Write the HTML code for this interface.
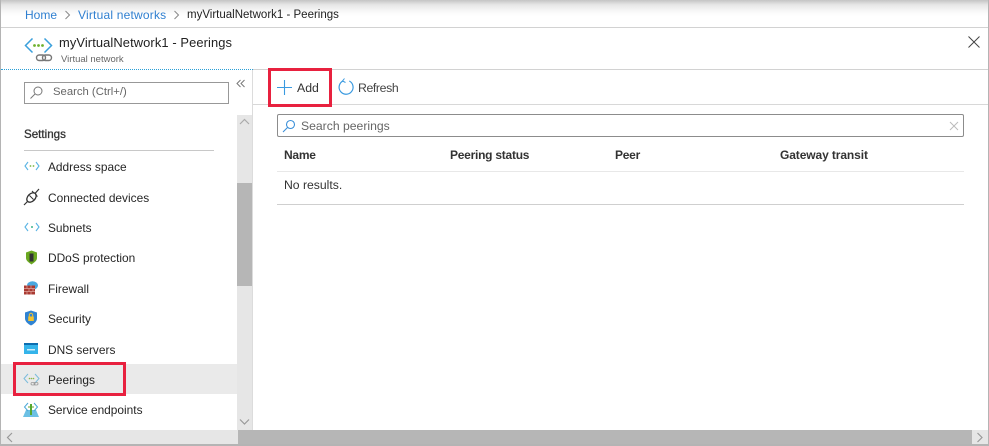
<!DOCTYPE html>
<html><head><meta charset="utf-8"><style>
html,body{margin:0;padding:0;background:#fff}
#p{position:relative;width:989px;height:446px;overflow:hidden;background:#fff;font-family:"Liberation Sans",sans-serif;font-size:12px;color:#262626}
#p div,#p svg{position:absolute}
.t{white-space:nowrap;line-height:16px;height:16px}
.m{left:48px;font-size:11.900px}
.b{font-weight:bold;font-size:12px;letter-spacing:-.25px;color:#333}
</style></head><body><div id="p">
<div style="left:0;top:0;width:989px;height:16px;background:linear-gradient(#c4c4c4,#e6e6e6 30%,#f8f8f8 70%,#fff)"></div>
<div style="left:0;top:27px;width:989px;height:1px;background:#d2d2d2"></div>
<div style="left:0;top:0;width:1px;height:446px;background:#b4b4b4"></div>
<div style="left:988px;top:0;width:1px;height:446px;background:#b4b4b4"></div>
<div class="t" style="left:25px;top:7px;color:#2f7fd0;font-size:12px">Home</div>
<svg style="left:64px;top:10px" width="8" height="10"><path d="M1.500 1l4 4-4 4" fill="none" stroke="#888"/></svg>
<div class="t" style="left:78px;top:7px;color:#2f7fd0;font-size:12px;letter-spacing:.2px">Virtual networks</div>
<svg style="left:173px;top:10px" width="8" height="10"><path d="M1.500 1l4 4-4 4" fill="none" stroke="#888"/></svg>
<div class="t" style="left:187px;top:7px;font-size:11.500px;color:#222">myVirtualNetwork1 - Peerings</div>
<svg style="left:24px;top:38px" width="30" height="25"><path d="M8.500 .5L1.500 7.500l7 7M20.500 .5l7 7-7 7" fill="none" stroke="#3aa0dc" stroke-width="1.500"/><circle cx="10.500" cy="7.500" r="1.400" fill="#6fb12c"/><circle cx="14.500" cy="7.500" r="1.400" fill="#6fb12c"/><circle cx="18.500" cy="7.500" r="1.400" fill="#6fb12c"/><rect x="12.500" y="17" width="9" height="5.500" rx="2.700" fill="none" stroke="#777" stroke-width="1.400"/><rect x="18.500" y="17" width="9" height="5.500" rx="2.700" fill="none" stroke="#777" stroke-width="1.400"/></svg>
<div class="t" style="left:59px;top:35px;font-size:12.900px;letter-spacing:.1px;color:#222">myVirtualNetwork1 - Peerings</div>
<div class="t" style="left:61px;top:52px;font-size:9.500px;color:#666">Virtual network</div>
<svg style="left:967px;top:35px" width="14" height="14"><path d="M1.500 1.500l11 11M12.500 1.500l-11 11" stroke="#444" fill="none"/></svg>
<div style="left:1px;top:69px;width:252px;height:0;border-top:1px dotted #2aa0d8"></div>
<div style="left:253px;top:69px;width:735px;height:1px;background:#d2d2d2"></div>
<div style="left:253px;top:104px;width:735px;height:1px;background:#d8d8d8"></div>
<div style="left:252px;top:70px;width:1px;height:360px;background:#dcdcdc"></div>
<div style="left:24px;top:82px;width:203px;height:20px;border:1px solid #989898"></div>
<svg style="left:29px;top:85px" width="15" height="15"><circle cx="9" cy="6" r="4" fill="none" stroke="#777"/><path d="M6 9l-4.500 4.500" stroke="#777" fill="none"/></svg>
<div class="t" style="left:53px;top:84px;font-size:11.300px;color:#666">Search (Ctrl+/)</div>
<svg style="left:236px;top:79px" width="10" height="10"><path d="M4.500 1L1 4.500 4.500 8M8.500 1L5 4.500 8.500 8" fill="none" stroke="#777"/></svg>
<div class="t b" style="left:24px;top:127px;font-size:11.600px;letter-spacing:0;font-weight:normal;-webkit-text-stroke:.3px #333">Settings</div>
<div style="left:24px;top:150px;width:190px;height:1px;background:#c8c8c8"></div>
<div style="left:237px;top:115px;width:15px;height:315px;background:#e6e6e6"></div>
<div style="left:237px;top:183px;width:15px;height:103px;background:#b6b6b6"></div>
<svg style="left:239px;top:118px" width="11" height="8"><path d="M1 6l4.500-4.500L10 6" fill="none" stroke="#aaa" stroke-width="1.200"/></svg>
<svg style="left:239px;top:418px" width="11" height="8"><path d="M1 1.500L5.500 6 10 1.500" fill="none" stroke="#999" stroke-width="1.200"/></svg>
<div style="left:1px;top:364px;width:236px;height:30px;background:#eaeaea"></div>
<div class="t m" style="top:159px">Address space</div>
<svg style="left:24px;top:160px" width="16" height="12"><path d="M4 2L1 6l3 4M12 2l3 4-3 4" fill="none" stroke="#5ab4e4" stroke-width="1.100"/><circle cx="6.500" cy="6" r=".9" fill="#7ab648"/><circle cx="9.500" cy="6" r=".9" fill="#7ab648"/></svg>
<div class="t m" style="top:190px">Connected devices</div>
<svg style="left:23px;top:188px" width="17" height="18"><path d="M1 17l4-4M12 5.500l4-4.500" fill="none" stroke="#333" stroke-width="1.200"/><ellipse cx="8.500" cy="9.500" rx="5.500" ry="3.700" transform="rotate(-45 8.500 9.500)" fill="none" stroke="#333" stroke-width="1.300"/><path d="M6.500 7.500l4 4M9 3l2 2M12.500 6.500l2 2" fill="none" stroke="#333"/></svg>
<div class="t m" style="top:220px">Subnets</div>
<svg style="left:24px;top:221px" width="16" height="12"><path d="M4 2L1 6l3 4M12 2l3 4-3 4" fill="none" stroke="#5ab4e4" stroke-width="1.100"/><circle cx="8" cy="6" r="1" fill="#3cb48c"/></svg>
<div class="t m" style="top:250px">DDoS protection</div>
<svg style="left:25px;top:250px" width="13" height="15"><path d="M1 2.500l5.500-2 5.500 2v5.500c0 3-3 4.500-5.500 6.500C4 12.500 1 11 1 8z" fill="#6aa820"/><rect x="4.500" y="3.500" width="4" height="8" fill="#333"/></svg>
<div class="t m" style="top:281px">Firewall</div>
<svg style="left:23px;top:280px" width="16" height="16"><ellipse cx="9.500" cy="5.500" rx="5.500" ry="4.300" fill="#4aa8e0"/><rect x="1" y="5.500" width="11" height="9" fill="#a93a32"/><path d="M1 8.500h11M1 11.500h11M4 5.500v3M8 5.500v3M6 8.500v3M10 8.500v3M4 11.500v3M8 11.500v3" stroke="#e0a49c" stroke-width=".7"/></svg>
<div class="t m" style="top:311px">Security</div>
<svg style="left:24px;top:310px" width="14" height="16"><path d="M1 2.500L7 .5l6 2v6c0 3-3 5.500-6 7-3-1.500-6-4-6-7z" fill="#2f83d2"/><rect x="4.200" y="6.500" width="5.600" height="4.500" fill="#f2c230"/><path d="M5.300 6.500V5a1.700 1.700 0 013.400 0v1.500" fill="none" stroke="#f2c230"/></svg>
<div class="t m" style="top:342px">DNS servers</div>
<svg style="left:24px;top:343px" width="14" height="12"><rect width="14" height="11" fill="#35b4ea"/><rect y="0" width="14" height="2" fill="#0e6eb0"/><rect x="3" y="6" width="8" height="1.500" fill="#cdeefb"/></svg>
<div class="t m" style="top:372px;color:#222">Peerings</div>
<svg style="left:23px;top:373px" width="17" height="14"><path d="M5 1L1 5.500 5 10M12 1l4 4.500-4 4.500" fill="none" stroke="#7abcdc" stroke-width="1"/><circle cx="6.500" cy="5.500" r=".8" fill="#8ab84c"/><circle cx="8.500" cy="5.500" r=".8" fill="#8ab84c"/><circle cx="10.500" cy="5.500" r=".8" fill="#8ab84c"/><rect x="8" y="9.500" width="4" height="2.500" rx="1.200" fill="none" stroke="#999" stroke-width=".8"/><rect x="11" y="9.500" width="4" height="2.500" rx="1.200" fill="none" stroke="#999" stroke-width=".8"/></svg>
<div class="t m" style="top:402px">Service endpoints</div>
<svg style="left:23px;top:402px" width="16" height="16"><path d="M0 15l3-7h10l3 7z" fill="#6cc0e4"/><path d="M5 1L1.500 5 5 9M11 1l3.500 4L11 9" fill="none" stroke="#4aa8d8"/><path d="M8 2v11" stroke="#54a830" stroke-width="2"/><circle cx="6" cy="5" r=".9" fill="#7ab648"/><circle cx="10" cy="5" r=".9" fill="#7ab648"/></svg>
<div style="left:13px;top:362px;width:107px;height:28px;border:3px solid #e8213f"></div>
<div style="left:268px;top:68px;width:58px;height:33px;border:3px solid #e8213f"></div>
<svg style="left:277px;top:80px" width="15" height="15"><path d="M7.500 0v15M0 7.500h15" stroke="#3a9ae0" stroke-width="1.100" fill="none"/></svg>
<div class="t" style="left:297px;top:80px;font-size:12.300px;color:#333">Add</div>
<svg style="left:337px;top:78px" width="18" height="18"><path d="M6.300 2.800a7 7 0 1 0 6 .2" fill="none" stroke="#3a9ae0" stroke-width="1.200"/><path d="M7.500 0.500L5.500 3l3 1.500" fill="none" stroke="#3a9ae0" stroke-width="1"/></svg>
<div class="t" style="left:358px;top:80px;font-size:12.300px;letter-spacing:-.4px;color:#444">Refresh</div>
<div style="left:277px;top:114px;width:685px;height:21px;border:1px solid #8c8c8c;border-radius:2px"></div>
<svg style="left:282px;top:119px" width="14" height="14"><circle cx="8.500" cy="5.500" r="4" fill="none" stroke="#3a8fd8" stroke-width="1.100"/><path d="M5.500 8.500L1 13" stroke="#3a8fd8" stroke-width="1.100" fill="none"/></svg>
<div class="t" style="left:301px;top:118px;font-size:12.200px;color:#666">Search peerings</div>
<svg style="left:949px;top:121px" width="10" height="10"><path d="M1 1l8 8M9 1L1 9" stroke="#bbb" fill="none"/></svg>
<div class="t b" style="left:284px;top:147px">Name</div>
<div class="t b" style="left:450px;top:147px">Peering status</div>
<div class="t b" style="left:615px;top:147px">Peer</div>
<div class="t b" style="left:780px;top:147px;letter-spacing:-.1px">Gateway transit</div>
<div style="left:277px;top:171px;width:687px;height:1px;background:#e8e8e8"></div>
<div class="t" style="left:284px;top:177px;font-size:12.200px;color:#333">No results.</div>
<div style="left:277px;top:204px;width:687px;height:1px;background:#cfcfcf"></div>
<div style="left:1px;top:430px;width:987px;height:14px;background:#e6e6e6"></div>
<div style="left:238px;top:430px;width:734px;height:14px;background:#b6b6b6"></div>
<svg style="left:6px;top:432px" width="8" height="11"><path d="M6 1L1.500 5.500 6 10" fill="none" stroke="#999" stroke-width="1.200"/></svg>
<svg style="left:976px;top:432px" width="8" height="11"><path d="M1.500 1L6 5.500 1.500 10" fill="none" stroke="#999" stroke-width="1.200"/></svg>
<div style="left:0;top:444px;width:989px;height:2px;background:#b4b4b4"></div>
</div></body></html>
